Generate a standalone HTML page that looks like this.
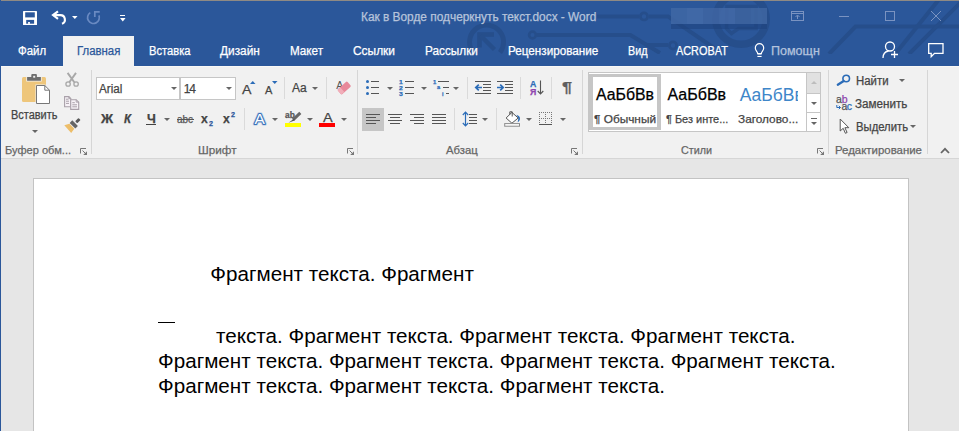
<!DOCTYPE html>
<html lang="ru"><head><meta charset="utf-8"><title>Как в Ворде подчеркнуть текст.docx - Word</title>
<style>
html,body{margin:0;padding:0;}
body{width:959px;height:431px;overflow:hidden;position:relative;background:#E6E6E6;font-family:"Liberation Sans",sans-serif;}
.r{position:absolute;display:block;overflow:visible;}
.t{position:absolute;white-space:pre;line-height:1;font-family:"Liberation Sans",sans-serif;}
.d{font-size:20.65px;color:#000;}
.t{-webkit-text-stroke:0.25px currentColor;}
.d{-webkit-text-stroke:0;}
svg text{font-family:"Liberation Sans",sans-serif;}
</style></head><body>
<div class="r" style="left:0px;top:0px;width:959px;height:66px;background:#2B579A;"></div>
<div class="r" style="left:1px;top:66px;width:958px;height:92px;background:#F1F1F1;"></div>
<div class="r" style="left:1px;top:158px;width:958px;height:1px;background:#D6D6D6;"></div>
<div class="r" style="left:63px;top:36px;width:71px;height:31px;background:#F1F1F1;"></div>
<div class="r" style="left:1px;top:66px;width:62px;height:1px;background:#F9F8F6;"></div>
<div class="r" style="left:134px;top:66px;width:825px;height:1px;background:#F9F8F6;"></div>
<div class="r" style="left:0px;top:0px;width:1px;height:431px;background:#2B579A;"></div>
<div class="r" style="left:33px;top:178px;width:876px;height:260px;background:#fff;border:1px solid #C3C3C3;box-sizing:border-box;"></div>
<svg class="r" style="left:0px;top:1px;overflow:hidden;" width="959" height="53" viewBox="0 1 959 53"><g fill="none" stroke="#264E8B" stroke-width="4">
<path d="M473.500 53A17 17 0 1 1 500 52.500" stroke-width="4.900"/>
<path d="M479.500 47.500V34.500H494" stroke-width="4.500"/><path d="M480.500 35.500L494.500 49.500" stroke-width="4.500"/>
<circle cx="532.500" cy="35" r="3.400" stroke-width="2.700"/>
<path d="M537 35H630.400L660 53" />
<path d="M597 16.400H639M649 16.400H668L714 48" />
<circle cx="644" cy="16.400" r="3.600" stroke-width="2.700"/>
<path d="M648 45H668"/>
<circle cx="673" cy="45.500" r="3.600" stroke-width="2.700"/>
<circle cx="741" cy="19" r="25.200" stroke-width="7.500"/>
<path d="M727 6.500h29v22h-17.500l-7 5-5-5z" stroke-width="3.500"/>
<path d="M959 26.500H855.500L829 54" />
<path d="M938.500 0L896 53" />
<path d="M962 1L909 54" />
</g></svg>
<div class="r" style="left:1px;top:0px;width:958px;height:1px;background:#8F8A84;"></div>
<span class="t" style="left:361.40px;top:11.00px;font-size:12px;color:#B7C4DB;letter-spacing:0.000px;transform:scaleX(0.9889);transform-origin:0 0;">Как в Ворде подчеркнуть текст.docx - Word</span>
<div class="r" style="left:671px;top:8px;width:16px;height:16px;background:rgba(64,103,164,0.850);"></div>
<div class="r" style="left:687px;top:8px;width:16px;height:16px;background:rgba(68,107,168,0.850);"></div>
<div class="r" style="left:703px;top:8px;width:16px;height:16px;background:rgba(63,101,162,0.850);"></div>
<div class="r" style="left:719px;top:8px;width:16px;height:16px;background:rgba(67,105,166,0.850);"></div>
<div class="r" style="left:735px;top:8px;width:16px;height:16px;background:rgba(61,99,158,0.850);"></div>
<div class="r" style="left:751px;top:8px;width:16px;height:16px;background:rgba(64,102,161,0.850);"></div>
<div class="r" style="left:671px;top:24px;width:96px;height:4.5px;background:rgba(30,66,125,0.550);"></div>
<svg class="r" style="left:791px;top:11px;" width="14" height="11" viewBox="0 0 14 11"><g fill="none" stroke="#7A93C1" stroke-width="1"><rect x="0.5" y="0.5" width="12" height="9"/><path d="M0.500 2.500h12M6.500 8V4.500M4.500 6l2-2 2 2"/></g></svg>
<div class="r" style="left:839px;top:16px;width:10px;height:1px;background:#7A93C1;"></div>
<svg class="r" style="left:885px;top:11px;" width="11" height="11" viewBox="0 0 11 11"><rect x="0.5" y="0.5" width="9" height="9" fill="none" stroke="#7A93C1"/></svg>
<svg class="r" style="left:930px;top:10px;" width="12" height="12" viewBox="0 0 12 12"><path d="M1 1l10 10M11 1L1 11" fill="none" stroke="#7A93C1" stroke-width="1"/></svg>
<svg class="r" style="left:23px;top:11px;" width="14" height="14" viewBox="0 0 14 14"><rect x="0" y="0" width="14" height="14" rx="0.600" fill="#fff"/><rect x="2.200" y="1.300" width="9.600" height="5.100" fill="#2B579A"/><rect x="3.200" y="8.900" width="7.900" height="3.800" fill="#2B579A"/><rect x="5" y="11.100" width="2" height="1.700" fill="#fff"/></svg>
<svg class="r" style="left:50px;top:9px;" width="18" height="17" viewBox="0 0 18 17"><g fill="none" stroke="#fff" stroke-width="2.100"><path d="M8 2.300L3 6.100L8 9.900" stroke-linejoin="miter"/><path d="M3.500 6.100H10.300A4.500 4.500 0 0 1 12 14.800"/></g></svg>
<svg class="r" style="left:71.7px;top:16px;" width="5.6" height="3.1" viewBox="0 0 5.6 3.1"><path d="M0 0H5.600L2.800 3.100Z" fill="#fff"/></svg>
<svg class="r" style="left:86px;top:9px;" width="16" height="17" viewBox="0 0 16 17"><g fill="none" stroke="#6A8AC2" stroke-width="1.700"><path d="M4.300 3.600A5.900 5.900 0 1 0 12.900 6.300"/><path d="M13.700 2.800H8.800V8"/></g></svg>
<div class="r" style="left:119.7px;top:14.7px;width:5.6px;height:1.3px;background:#fff;"></div>
<svg class="r" style="left:119.7px;top:17.5px;" width="5.6" height="3.4" viewBox="0 0 5.6 3.4"><path d="M0 0H5.600L2.800 3.400Z" fill="#fff"/></svg>
<span class="t" style="left:17.50px;top:45.00px;font-size:12px;color:#fff;letter-spacing:0.000px;transform:scaleX(0.9519);transform-origin:0 0;">Файл</span>
<span class="t" style="left:76.60px;top:45.00px;font-size:12px;color:#2B579A;letter-spacing:0.000px;transform:scaleX(0.9493);transform-origin:0 0;">Главная</span>
<span class="t" style="left:149.20px;top:45.00px;font-size:12px;color:#fff;letter-spacing:0.000px;transform:scaleX(0.9319);transform-origin:0 0;">Вставка</span>
<span class="t" style="left:220.00px;top:45.00px;font-size:12px;color:#fff;letter-spacing:0.000px;transform:scaleX(0.9871);transform-origin:0 0;">Дизайн</span>
<span class="t" style="left:289.50px;top:45.00px;font-size:12px;color:#fff;letter-spacing:0.000px;transform:scaleX(0.9717);transform-origin:0 0;">Макет</span>
<span class="t" style="left:352.70px;top:45.00px;font-size:12px;color:#fff;letter-spacing:0.000px;transform:scaleX(0.9943);transform-origin:0 0;">Ссылки</span>
<span class="t" style="left:424.50px;top:45.00px;font-size:12px;color:#fff;letter-spacing:0.000px;transform:scaleX(0.9818);transform-origin:0 0;">Рассылки</span>
<span class="t" style="left:507.70px;top:45.00px;font-size:12px;color:#fff;letter-spacing:0.000px;transform:scaleX(0.9747);transform-origin:0 0;">Рецензирование</span>
<span class="t" style="left:627.50px;top:45.00px;font-size:12px;color:#fff;letter-spacing:0.000px;transform:scaleX(0.8978);transform-origin:0 0;">Вид</span>
<span class="t" style="left:676.20px;top:45.00px;font-size:12px;color:#fff;letter-spacing:0.000px;transform:scaleX(0.9069);transform-origin:0 0;">ACROBAT</span>
<span class="t" style="left:771.20px;top:45.00px;font-size:12px;color:#B4C3DD;letter-spacing:0.000px;transform:scaleX(1.0454);transform-origin:0 0;">Помощн</span>
<svg class="r" style="left:754px;top:43px;" width="12" height="15" viewBox="0 0 12 15"><path d="M3.700 10.500c0-1.800-2.400-2.900-2.400-5.600a4.200 4.200 0 0 1 8.400 0c0 2.700-2.400 3.800-2.400 5.600z" fill="none" stroke="#fff" stroke-width="1.200"/><rect x="3.400" y="10" width="4.200" height="1.600" fill="#fff"/><rect x="3.400" y="12.900" width="4.200" height="1.100" fill="#fff"/></svg>
<svg class="r" style="left:881px;top:41px;" width="18" height="18" viewBox="0 0 18 18"><g fill="none" stroke="#fff" stroke-width="1.300"><circle cx="9" cy="5.500" r="4.500"/><path d="M2 17c0-4 2.500-6.500 5.500-7"/><path d="M10 13.500h7M13.500 10v7"/></g></svg>
<svg class="r" style="left:927px;top:42px;" width="18" height="17" viewBox="0 0 18 17"><path d="M1.700 1.700h14.300v9.600h-8.500l-3.300 3.400v-3.400h-2.500z" fill="none" stroke="#fff" stroke-width="1.300"/></svg>
<div class="r" style="left:91px;top:70px;width:1px;height:84px;background:#D6D6D6;"></div>
<div class="r" style="left:357px;top:70px;width:1px;height:84px;background:#D6D6D6;"></div>
<div class="r" style="left:582px;top:70px;width:1px;height:84px;background:#D6D6D6;"></div>
<div class="r" style="left:828px;top:70px;width:1px;height:84px;background:#D6D6D6;"></div>
<div class="r" style="left:927px;top:70px;width:1px;height:84px;background:#D6D6D6;"></div>
<div class="r" style="left:284px;top:77px;width:1px;height:22px;background:#DADADA;"></div>
<div class="r" style="left:326px;top:77px;width:1px;height:22px;background:#DADADA;"></div>
<div class="r" style="left:467px;top:77px;width:1px;height:22px;background:#DADADA;"></div>
<div class="r" style="left:520px;top:77px;width:1px;height:22px;background:#DADADA;"></div>
<div class="r" style="left:551px;top:77px;width:1px;height:22px;background:#DADADA;"></div>
<div class="r" style="left:244px;top:108px;width:1px;height:22px;background:#DADADA;"></div>
<div class="r" style="left:454px;top:108px;width:1px;height:22px;background:#DADADA;"></div>
<div class="r" style="left:496px;top:108px;width:1px;height:22px;background:#DADADA;"></div>
<span class="t" style="left:4.50px;top:145.00px;font-size:11.5px;color:#666;letter-spacing:0.000px;transform:scaleX(0.9629);transform-origin:0 0;">Буфер обм...</span>
<span class="t" style="left:197.50px;top:145.00px;font-size:11.5px;color:#666;letter-spacing:0.000px;transform:scaleX(1.0176);transform-origin:0 0;">Шрифт</span>
<span class="t" style="left:446.20px;top:145.00px;font-size:11.5px;color:#666;letter-spacing:0.000px;transform:scaleX(0.9841);transform-origin:0 0;">Абзац</span>
<span class="t" style="left:681.20px;top:145.00px;font-size:11.5px;color:#666;letter-spacing:0.000px;transform:scaleX(0.9360);transform-origin:0 0;">Стили</span>
<span class="t" style="left:834.50px;top:145.00px;font-size:11.5px;color:#666;letter-spacing:0.000px;transform:scaleX(0.9928);transform-origin:0 0;">Редактирование</span>
<svg class="r" style="left:80px;top:147.5px;" width="8" height="8" viewBox="0 0 8 8"><g fill="none" stroke="#777" stroke-width="1"><path d="M0.500 5.500V0.500H6"/><path d="M2.500 2.500L5.500 5.500"/></g><path d="M7 3.200V7H3.200Z" fill="#777"/></svg>
<svg class="r" style="left:346.5px;top:147.5px;" width="8" height="8" viewBox="0 0 8 8"><g fill="none" stroke="#777" stroke-width="1"><path d="M0.500 5.500V0.500H6"/><path d="M2.500 2.500L5.500 5.500"/></g><path d="M7 3.200V7H3.200Z" fill="#777"/></svg>
<svg class="r" style="left:571px;top:147.5px;" width="8" height="8" viewBox="0 0 8 8"><g fill="none" stroke="#777" stroke-width="1"><path d="M0.500 5.500V0.500H6"/><path d="M2.500 2.500L5.500 5.500"/></g><path d="M7 3.200V7H3.200Z" fill="#777"/></svg>
<svg class="r" style="left:817px;top:147.5px;" width="8" height="8" viewBox="0 0 8 8"><g fill="none" stroke="#777" stroke-width="1"><path d="M0.500 5.500V0.500H6"/><path d="M2.500 2.500L5.500 5.500"/></g><path d="M7 3.200V7H3.200Z" fill="#777"/></svg>
<svg class="r" style="left:939.5px;top:146.5px;" width="10" height="7" viewBox="0 0 10 7"><path d="M1 6L5 1.800L9 6" fill="none" stroke="#666" stroke-width="1.800"/></svg>
<svg class="r" style="left:22px;top:74px;" width="29" height="31" viewBox="0 0 29 31"><rect x="0" y="3" width="24" height="25" rx="1.500" fill="#EEC67B"/>
<path d="M4.300 7.500V2.200h4.200V0.800a1.500 1.500 0 0 1 1.500-1.500h4a1.500 1.500 0 0 1 1.500 1.500V2.200h4.200V7.500z" fill="#F1F1F1"/>
<path d="M5.100 6.700V3h4.200V1a1 1 0 0 1 1-1h3.600a1 1 0 0 1 1 1V3h4V6.700z" fill="#6E6E6E"/><rect x="11.200" y="1.800" width="2" height="1.900" fill="#F1F1F1"/>
<path d="M13.500 10.500h9.700l5.300 5.300v14.700h-15z" fill="#F1F1F1"/>
<path d="M14.500 11.500h8.300l4.700 4.700v13.300h-13z" fill="#fff" stroke="#777" stroke-width="1"/><path d="M22.800 11.500v4.700h4.700" fill="none" stroke="#777"/></svg>
<span class="t" style="left:10.50px;top:109.00px;font-size:12px;color:#444;letter-spacing:0.000px;transform:scaleX(0.9139);transform-origin:0 0;">Вставить</span>
<svg class="r" style="left:31.5px;top:129.5px;" width="6" height="3" viewBox="0 0 6 3"><path d="M0 0H6L3 3Z" fill="#666"/></svg>
<svg class="r" style="left:64px;top:72px;" width="16" height="16" viewBox="0 0 16 16"><g fill="none" stroke="#A8A8A8"><path d="M3.600 0.900L10.300 10.200M12 0.900L5.300 10.200" stroke-width="1.900"/><circle cx="4.100" cy="12" r="2.200" stroke-width="1.300"/><circle cx="12.100" cy="12" r="2.200" stroke-width="1.300"/></g></svg>
<svg class="r" style="left:64px;top:96px;" width="16" height="15" viewBox="0 0 16 15"><g fill="#F7F2F7" stroke="#A9A0A9" stroke-width="1.100"><path d="M0.600 0.600h4.200l2 2v8.200h-6.200z"/><path d="M6.700 3.700h5.500l2.500 2.500v7.200h-8z"/></g><path d="M4.800 0.600v2h2M12.200 3.700v2.500h2.500" fill="none" stroke="#A9A0A9" stroke-width="0.900"/><path d="M2 3.200h2.500M2 5.200h3M2 7.400h3M8.300 6.700h2.500M8.300 8.800h4.700M8.300 10.800h4.700" stroke="#A9A0A9" stroke-width="1"/></svg>
<svg class="r" style="left:64px;top:118px;" width="17" height="16" viewBox="0 0 17 16"><path d="M0.300 7.200L5.400 5.700L10.300 10.800L7.200 14.900z" fill="#EDBE6A"/><path d="M8.300 2.300l5.600 5.600-2.600 2.600-5.600-5.600z" fill="#666"/><rect x="-1.500" y="-4.600" width="3" height="4.800" rx="0.800" transform="translate(12.300 4.200) rotate(45)" fill="#5A5A5A"/></svg>
<div class="r" style="left:96px;top:77px;width:84px;height:23px;background:#fff;border:1px solid #C6C6C6;box-sizing:border-box;"></div>
<div class="r" style="left:180px;top:77px;width:56px;height:23px;background:#fff;border:1px solid #C6C6C6;box-sizing:border-box;"></div>
<span class="t" style="left:99.20px;top:83.00px;font-size:12px;color:#444;letter-spacing:0.000px;transform:scaleX(0.9708);transform-origin:0 0;">Arial</span>
<span class="t" style="left:183.80px;top:83.00px;font-size:12px;color:#444;letter-spacing:0.000px;letter-spacing:-1.3px;">14</span>
<svg class="r" style="left:170.5px;top:87px;" width="6" height="3" viewBox="0 0 6 3"><path d="M0 0H6L3 3Z" fill="#666"/></svg>
<svg class="r" style="left:225.5px;top:87px;" width="6" height="3" viewBox="0 0 6 3"><path d="M0 0H6L3 3Z" fill="#666"/></svg>
<span class="t" style="left:100.83px;top:113.00px;font-size:12.5px;color:#444;letter-spacing:0.000px;font-weight:bold;transform:scaleX(1.0696);transform-origin:0 0;">Ж</span>
<span class="t" style="left:124.20px;top:113.00px;font-size:12.5px;color:#444;letter-spacing:0.000px;font-weight:bold;font-style:italic;transform:scaleX(0.9176);transform-origin:0 0;">К</span>
<span class="t" style="left:146.50px;top:113.00px;font-size:12.5px;color:#444;letter-spacing:0.000px;font-weight:bold;transform:scaleX(1.0057);transform-origin:0 0;">Ч</span>
<div class="r" style="left:146px;top:124px;width:10px;height:1px;background:#444;"></div>
<svg class="r" style="left:164px;top:118px;" width="6" height="3" viewBox="0 0 6 3"><path d="M0 0H6L3 3Z" fill="#666"/></svg>
<span class="t" style="left:177.00px;top:114.00px;font-size:11px;color:#555;letter-spacing:0.000px;transform:scaleX(0.9034);transform-origin:0 0;">abc</span>
<div class="r" style="left:176.5px;top:119px;width:17px;height:1px;background:#555;"></div>
<span class="t" style="left:201.20px;top:112.00px;font-size:13px;color:#444;letter-spacing:0.000px;font-weight:bold;transform:scaleX(0.9341);transform-origin:0 0;">x</span>
<span class="t" style="left:209.00px;top:121.00px;font-size:6.5px;color:#2B579A;letter-spacing:0.000px;font-weight:bold;transform:scaleX(1.0989);transform-origin:0 0;">2</span>
<span class="t" style="left:223.20px;top:112.00px;font-size:13px;color:#444;letter-spacing:0.000px;font-weight:bold;transform:scaleX(0.9341);transform-origin:0 0;">x</span>
<span class="t" style="left:231.00px;top:112.00px;font-size:6.5px;color:#2B579A;letter-spacing:0.000px;font-weight:bold;transform:scaleX(1.0989);transform-origin:0 0;">2</span>
<span class="t" style="left:242.10px;top:83.00px;font-size:13.5px;color:#444;letter-spacing:0.000px;transform:scaleX(1.0503);transform-origin:0 0;">A</span>
<svg class="r" style="left:250px;top:81px;" width="5.5" height="3" viewBox="0 0 5.5 3"><path d="M0 3H5.500L2.750 0Z" fill="#2B6CB8"/></svg>
<span class="t" style="left:265.40px;top:85.00px;font-size:10.7px;color:#444;letter-spacing:0.000px;transform:scaleX(1.0322);transform-origin:0 0;">A</span>
<svg class="r" style="left:272px;top:81px;" width="5.5" height="3" viewBox="0 0 5.5 3"><path d="M0 0H5.500L2.750 3Z" fill="#2B6CB8"/></svg>
<span class="t" style="left:292.40px;top:82.00px;font-size:12.5px;color:#444;letter-spacing:0.000px;transform:scaleX(0.9626);transform-origin:0 0;">Aa</span>
<svg class="r" style="left:311.6px;top:87px;" width="6" height="3" viewBox="0 0 6 3"><path d="M0 0H6L3 3Z" fill="#666"/></svg>
<svg class="r" style="left:335px;top:80px;" width="17" height="16" viewBox="0 0 17 16"><text x="1.200" y="8.800" font-size="10.500" fill="#555">A</text><g transform="translate(9.200 8) rotate(-42)"><rect x="-6.500" y="-3.300" width="13" height="6.600" rx="1.200" fill="#E8899A"/><path d="M-6.500 -1.800a1.200 1.200 0 0 1 1.200-1.200h2.800v6h-2.800a1.200 1.200 0 0 1-1.200-1.200z" fill="#F1AEB9"/></g></svg>
<svg class="r" style="left:250px;top:109px;" width="20" height="18" viewBox="0 0 20 18"><text x="4.600" y="15.300" font-size="15.500" fill="#fff" stroke="#A9C4E6" stroke-width="3.600" stroke-linejoin="round" opacity="0.600">A</text><text x="4.600" y="15.300" font-size="15.500" fill="#fff" stroke="#3B73B9" stroke-width="2.200" stroke-linejoin="round" paint-order="stroke">A</text></svg>
<svg class="r" style="left:271.5px;top:118px;" width="6" height="3" viewBox="0 0 6 3"><path d="M0 0H6L3 3Z" fill="#666"/></svg>
<span class="t" style="left:285.20px;top:110.00px;font-size:9.5px;color:#555;letter-spacing:0.000px;font-weight:bold;transform:scaleX(0.8817);transform-origin:0 0;">ab</span>
<svg class="r" style="left:288px;top:111px;" width="14" height="12" viewBox="0 0 14 12"><path d="M12.300 1.800L5 8.800" stroke="#666" stroke-width="3" fill="none"/><path d="M6.300 7.500L0.500 11.800l6-2.200z" fill="#555"/></svg>
<div class="r" style="left:285px;top:123px;width:16px;height:4px;background:#FFFF00;"></div>
<svg class="r" style="left:306.5px;top:118px;" width="6" height="3" viewBox="0 0 6 3"><path d="M0 0H6L3 3Z" fill="#666"/></svg>
<span class="t" style="left:322.50px;top:111.00px;font-size:13.3px;color:#444;letter-spacing:0.000px;transform:scaleX(1.0885);transform-origin:0 0;">A</span>
<div class="r" style="left:319px;top:123px;width:16px;height:4px;background:#FF0000;"></div>
<svg class="r" style="left:340.5px;top:118px;" width="6" height="3" viewBox="0 0 6 3"><path d="M0 0H6L3 3Z" fill="#666"/></svg>
<div class="r" style="left:366px;top:80px;width:3px;height:3px;background:#2B6CB8;border-radius:1.500px;"></div>
<div class="r" style="left:371px;top:81px;width:8px;height:1px;background:#555;"></div>
<div class="r" style="left:366px;top:86px;width:3px;height:3px;background:#2B6CB8;border-radius:1.500px;"></div>
<div class="r" style="left:371px;top:87px;width:8px;height:1px;background:#555;"></div>
<div class="r" style="left:366px;top:92px;width:3px;height:3px;background:#2B6CB8;border-radius:1.500px;"></div>
<div class="r" style="left:371px;top:93px;width:8px;height:1px;background:#555;"></div>
<svg class="r" style="left:386.5px;top:87px;" width="6" height="3" viewBox="0 0 6 3"><path d="M0 0H6L3 3Z" fill="#666"/></svg>
<span class="t" style="left:399.20px;top:79.00px;font-size:6px;color:#2B6CB8;letter-spacing:0.000px;font-weight:bold;transform:scaleX(1.1310);transform-origin:0 0;">1</span>
<div class="r" style="left:405px;top:81px;width:9px;height:1px;background:#555;"></div>
<span class="t" style="left:399.20px;top:85.00px;font-size:6px;color:#2B6CB8;letter-spacing:0.000px;font-weight:bold;transform:scaleX(1.1310);transform-origin:0 0;">2</span>
<div class="r" style="left:405px;top:87px;width:9px;height:1px;background:#555;"></div>
<span class="t" style="left:399.20px;top:91.00px;font-size:6px;color:#2B6CB8;letter-spacing:0.000px;font-weight:bold;transform:scaleX(1.1310);transform-origin:0 0;">3</span>
<div class="r" style="left:405px;top:93px;width:9px;height:1px;background:#555;"></div>
<svg class="r" style="left:420.5px;top:87px;" width="6" height="3" viewBox="0 0 6 3"><path d="M0 0H6L3 3Z" fill="#666"/></svg>
<span class="t" style="left:432.70px;top:79.00px;font-size:6px;color:#2B6CB8;letter-spacing:0.000px;font-weight:bold;transform:scaleX(0.9821);transform-origin:0 0;">1</span>
<div class="r" style="left:438px;top:81px;width:11px;height:1px;background:#555;"></div>
<span class="t" style="left:436.80px;top:84.00px;font-size:6px;color:#2B6CB8;letter-spacing:0.000px;font-weight:bold;transform:scaleX(0.9357);transform-origin:0 0;">a</span>
<div class="r" style="left:443px;top:87px;width:6px;height:1px;background:#555;"></div>
<span class="t" style="left:441.50px;top:91.00px;font-size:6px;color:#2B6CB8;letter-spacing:0.000px;font-weight:bold;transform:scaleX(0.8929);transform-origin:0 0;">i</span>
<div class="r" style="left:446px;top:93px;width:3px;height:1px;background:#555;"></div>
<svg class="r" style="left:452.5px;top:87px;" width="6" height="3" viewBox="0 0 6 3"><path d="M0 0H6L3 3Z" fill="#666"/></svg>
<div class="r" style="left:475px;top:81px;width:16px;height:1px;background:#555;"></div>
<div class="r" style="left:483px;top:84px;width:8px;height:1px;background:#555;"></div>
<div class="r" style="left:483px;top:87px;width:8px;height:1px;background:#555;"></div>
<div class="r" style="left:483px;top:90px;width:8px;height:1px;background:#555;"></div>
<div class="r" style="left:475px;top:93px;width:16px;height:1px;background:#555;"></div>
<svg class="r" style="left:475px;top:84px;" width="8" height="7" viewBox="0 0 8 7"><path d="M7 3.500h-6M3.800 0.700l-3 2.800l3 2.800" fill="none" stroke="#2B6CB8" stroke-width="1.700"/></svg>
<div class="r" style="left:497px;top:81px;width:16px;height:1px;background:#555;"></div>
<div class="r" style="left:505px;top:84px;width:8px;height:1px;background:#555;"></div>
<div class="r" style="left:505px;top:87px;width:8px;height:1px;background:#555;"></div>
<div class="r" style="left:505px;top:90px;width:8px;height:1px;background:#555;"></div>
<div class="r" style="left:497px;top:93px;width:16px;height:1px;background:#555;"></div>
<svg class="r" style="left:497px;top:84px;" width="8" height="7" viewBox="0 0 8 7"><path d="M0 3.500h6M3.200 0.700l3 2.800l-3 2.800" fill="none" stroke="#2B6CB8" stroke-width="1.700"/></svg>
<span class="t" style="left:529.80px;top:80.00px;font-size:9px;color:#2B6CB8;letter-spacing:0.000px;font-weight:bold;transform:scaleX(0.9722);transform-origin:0 0;">A</span>
<span class="t" style="left:529.80px;top:88.00px;font-size:9px;color:#8E44AD;letter-spacing:0.000px;font-weight:bold;transform:scaleX(0.9722);transform-origin:0 0;">Я</span>
<svg class="r" style="left:537px;top:80px;" width="8" height="15" viewBox="0 0 8 15"><path d="M3.500 0.400v13.600M0.700 11L3.500 14L6.300 11" fill="none" stroke="#555" stroke-width="1.100"/></svg>
<span class="t" style="left:561.80px;top:80.00px;font-size:14.5px;color:#5E5E5E;letter-spacing:0.000px;font-weight:bold;transform:scaleX(1.25);transform-origin:0 0;">¶</span>
<div class="r" style="left:362px;top:108px;width:22px;height:23px;background:#C6C6C6;"></div>
<div class="r" style="left:366px;top:114px;width:14px;height:1px;background:#555;"></div>
<div class="r" style="left:366px;top:117px;width:10px;height:1px;background:#555;"></div>
<div class="r" style="left:366px;top:120px;width:14px;height:1px;background:#555;"></div>
<div class="r" style="left:366px;top:123px;width:10px;height:1px;background:#555;"></div>
<div class="r" style="left:388px;top:114px;width:14px;height:1px;background:#555;"></div>
<div class="r" style="left:390px;top:117px;width:10px;height:1px;background:#555;"></div>
<div class="r" style="left:388px;top:120px;width:14px;height:1px;background:#555;"></div>
<div class="r" style="left:390px;top:123px;width:10px;height:1px;background:#555;"></div>
<div class="r" style="left:410px;top:114px;width:14px;height:1px;background:#555;"></div>
<div class="r" style="left:414px;top:117px;width:10px;height:1px;background:#555;"></div>
<div class="r" style="left:410px;top:120px;width:14px;height:1px;background:#555;"></div>
<div class="r" style="left:414px;top:123px;width:10px;height:1px;background:#555;"></div>
<div class="r" style="left:432px;top:114px;width:14px;height:1px;background:#555;"></div>
<div class="r" style="left:432px;top:117px;width:14px;height:1px;background:#555;"></div>
<div class="r" style="left:432px;top:120px;width:14px;height:1px;background:#555;"></div>
<div class="r" style="left:432px;top:123px;width:14px;height:1px;background:#555;"></div>
<svg class="r" style="left:462px;top:111px;" width="7" height="16" viewBox="0 0 7 16"><path d="M3.500 1v14M0.800 4L3.500 1.200L6.200 4M0.800 12L3.500 14.800L6.200 12" fill="none" stroke="#2B6CB8" stroke-width="1.200"/></svg>
<div class="r" style="left:469px;top:114px;width:8px;height:1px;background:#555;"></div>
<div class="r" style="left:469px;top:117px;width:8px;height:1px;background:#555;"></div>
<div class="r" style="left:469px;top:120px;width:8px;height:1px;background:#555;"></div>
<div class="r" style="left:469px;top:123px;width:8px;height:1px;background:#555;"></div>
<svg class="r" style="left:481.5px;top:118px;" width="6" height="3" viewBox="0 0 6 3"><path d="M0 0H6L3 3Z" fill="#666"/></svg>
<svg class="r" style="left:504px;top:110px;" width="17" height="17" viewBox="0 0 17 17"><path d="M12.400 4.700C14.800 5.300 16.200 7 16 9C15.800 10.500 14.800 11.700 13.600 12.300C14.200 10.500 14.300 9 14.200 8z" fill="#2B6CB8"/><path d="M7.900 2.400L14.200 8L7.900 13.200L2.100 8z" fill="#fff" stroke="#555" stroke-width="1"/><path d="M5.800 4.600V1.800h2.400V6.500" fill="none" stroke="#555" stroke-width="1"/><rect x="0.700" y="13.600" width="14.800" height="2.600" fill="#fff" stroke="#8A8A8A" stroke-width="1"/></svg>
<svg class="r" style="left:525.5px;top:118px;" width="6" height="3" viewBox="0 0 6 3"><path d="M0 0H6L3 3Z" fill="#666"/></svg>
<svg class="r" style="left:539px;top:112px;" width="14" height="14" viewBox="0 0 14 14"><g fill="#777"><rect x="0" y="0" width="1" height="1"/><rect x="0" y="6" width="1" height="1"/><rect x="0" y="0" width="1" height="1"/><rect x="6" y="0" width="1" height="1"/><rect x="12" y="0" width="1" height="1"/><rect x="2" y="0" width="1" height="1"/><rect x="2" y="6" width="1" height="1"/><rect x="0" y="2" width="1" height="1"/><rect x="6" y="2" width="1" height="1"/><rect x="12" y="2" width="1" height="1"/><rect x="4" y="0" width="1" height="1"/><rect x="4" y="6" width="1" height="1"/><rect x="0" y="4" width="1" height="1"/><rect x="6" y="4" width="1" height="1"/><rect x="12" y="4" width="1" height="1"/><rect x="6" y="0" width="1" height="1"/><rect x="6" y="6" width="1" height="1"/><rect x="0" y="6" width="1" height="1"/><rect x="6" y="6" width="1" height="1"/><rect x="12" y="6" width="1" height="1"/><rect x="8" y="0" width="1" height="1"/><rect x="8" y="6" width="1" height="1"/><rect x="0" y="8" width="1" height="1"/><rect x="6" y="8" width="1" height="1"/><rect x="12" y="8" width="1" height="1"/><rect x="10" y="0" width="1" height="1"/><rect x="10" y="6" width="1" height="1"/><rect x="0" y="10" width="1" height="1"/><rect x="6" y="10" width="1" height="1"/><rect x="12" y="10" width="1" height="1"/><rect x="12" y="0" width="1" height="1"/><rect x="12" y="6" width="1" height="1"/><rect x="0" y="12" width="1" height="1"/><rect x="6" y="12" width="1" height="1"/><rect x="12" y="12" width="1" height="1"/></g><rect x="0" y="12" width="13" height="1" fill="#555"/></svg>
<svg class="r" style="left:559.5px;top:118px;" width="6" height="3" viewBox="0 0 6 3"><path d="M0 0H6L3 3Z" fill="#666"/></svg>
<div class="r" style="left:588px;top:72px;width:219px;height:60px;background:#fff;border:1px solid #C6C6C6;box-sizing:border-box;"></div>
<div class="r" style="left:589px;top:74px;width:72px;height:56px;background:#fff;border:4px solid #C6C6C6;border-top-width:3.5px;border-bottom-width:3.5px;box-sizing:border-box;"></div>
<span class="t" style="left:595.70px;top:87.00px;font-size:16px;color:#000;letter-spacing:0.000px;transform:scaleX(0.9904);transform-origin:0 0;">АаБбВв</span>
<span class="t" style="left:593.70px;top:114.00px;font-size:11.5px;color:#444;letter-spacing:0.000px;transform:scaleX(1.0308);transform-origin:0 0;">¶ Обычный</span>
<span class="t" style="left:667.50px;top:87.00px;font-size:16px;color:#000;letter-spacing:0.000px;">АаБбВв</span>
<span class="t" style="left:665.50px;top:114.00px;font-size:11.5px;color:#444;letter-spacing:0.000px;transform:scaleX(0.9521);transform-origin:0 0;">¶ Без инте...</span>
<div class="r" style="left:738px;top:80px;width:60px;height:26px;overflow:hidden;">
<span class="t" style="left:1.70px;top:7.00px;font-size:17.5px;color:#3E86C9;letter-spacing:0.000px;-webkit-text-stroke:0;">АаБбВв</span>
</div>
<span class="t" style="left:738.30px;top:114.00px;font-size:11.5px;color:#444;letter-spacing:0.000px;transform:scaleX(1.0281);transform-origin:0 0;">Заголово...</span>
<div class="r" style="left:806px;top:72px;width:15px;height:22px;background:#E1E1E1;border:1px solid #C6C6C6;box-sizing:border-box;"></div>
<div class="r" style="left:806px;top:93px;width:15px;height:20px;background:#fff;border:1px solid #C6C6C6;box-sizing:border-box;"></div>
<div class="r" style="left:806px;top:112px;width:15px;height:20px;background:#fff;border:1px solid #C6C6C6;box-sizing:border-box;"></div>
<svg class="r" style="left:810.5px;top:81px;" width="6" height="3" viewBox="0 0 6 3"><path d="M0 3H6L3 0Z" fill="#BDBDBD"/></svg>
<svg class="r" style="left:810.5px;top:101.5px;" width="6" height="3" viewBox="0 0 6 3"><path d="M0 0H6L3 3Z" fill="#666"/></svg>
<div class="r" style="left:810.5px;top:118px;width:6px;height:1px;background:#666;"></div>
<svg class="r" style="left:810.5px;top:121.5px;" width="6" height="3" viewBox="0 0 6 3"><path d="M0 0H6L3 3Z" fill="#666"/></svg>
<svg class="r" style="left:836px;top:73px;" width="15" height="13" viewBox="0 0 15 13"><circle cx="10.200" cy="5.500" r="3.300" fill="none" stroke="#2B6CB8" stroke-width="1.600"/><path d="M7.700 8L1.800 11.700" stroke="#2B6CB8" stroke-width="2.300" stroke-linecap="round"/></svg>
<span class="t" style="left:855.60px;top:75.00px;font-size:12px;color:#444;letter-spacing:0.000px;transform:scaleX(0.9503);transform-origin:0 0;">Найти</span>
<svg class="r" style="left:898.7px;top:79px;" width="6" height="3" viewBox="0 0 6 3"><path d="M0 0H6L3 3Z" fill="#666"/></svg>
<span class="t" style="left:836.00px;top:94.00px;font-size:10.5px;color:#555;letter-spacing:0.000px;">a</span>
<span class="t" style="left:841.80px;top:94.00px;font-size:10.5px;color:#8E44AD;letter-spacing:0.000px;">b</span>
<span class="t" style="left:841.40px;top:101.00px;font-size:10.5px;color:#555;letter-spacing:0.000px;">a</span>
<span class="t" style="left:846.80px;top:101.00px;font-size:10.5px;color:#2B6CB8;letter-spacing:0.000px;">c</span>
<svg class="r" style="left:836px;top:104.5px;" width="6" height="5" viewBox="0 0 6 5"><path d="M0.800 0v2.500h3.600M2.800 0.800l1.700 1.700-1.700 1.700" fill="none" stroke="#2B6CB8" stroke-width="1"/></svg>
<span class="t" style="left:855.20px;top:98.00px;font-size:12px;color:#444;letter-spacing:0.000px;transform:scaleX(0.9725);transform-origin:0 0;">Заменить</span>
<svg class="r" style="left:839px;top:117.5px;" width="11" height="16" viewBox="0 0 11 16"><path d="M1.200 1v12l3-2.700 2.200 5 1.700-0.800-2.200-4.800h3.900z" fill="#fff" stroke="#555" stroke-width="1"/></svg>
<span class="t" style="left:855.60px;top:121.00px;font-size:12px;color:#444;letter-spacing:0.000px;transform:scaleX(0.9400);transform-origin:0 0;">Выделить</span>
<svg class="r" style="left:910.4px;top:125px;" width="6" height="3" viewBox="0 0 6 3"><path d="M0 0H6L3 3Z" fill="#666"/></svg>
<span class="t d" style="left:210.3px;top:264.00px;">Фрагмент текста. Фрагмент</span>
<div class="r" style="left:158.3px;top:321.7px;width:16.6px;height:1.15px;background:#000;"></div>
<span class="t d" style="left:216px;top:326.00px;">текста. Фрагмент текста. Фрагмент текста. Фрагмент текста.</span>
<span class="t d" style="left:158px;top:351.00px;">Фрагмент текста. Фрагмент текста. Фрагмент текста. Фрагмент текста.</span>
<span class="t d" style="left:158px;top:376.00px;">Фрагмент текста. Фрагмент текста. Фрагмент текста.</span>
</body></html>
